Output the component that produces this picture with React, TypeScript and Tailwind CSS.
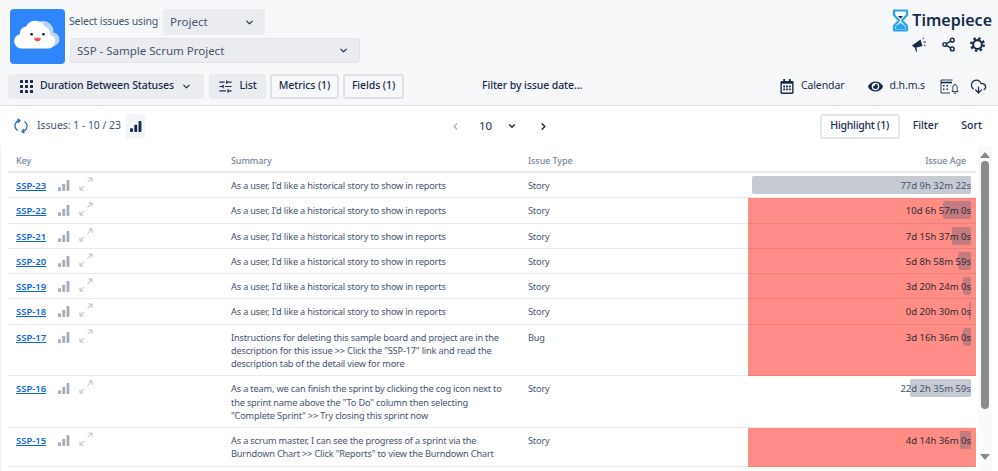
import React from "react";
import { ChevronDown, ChevronLeft, ChevronRight, SlidersHorizontal, Share2, CloudDownload } from "lucide-react";
import { FaRegCalendarAlt, FaEye } from "react-icons/fa";

const navy = "#172b4d";

const Bars = ({ className, color }: { className?: string; color: string }) => (
  <svg viewBox="0 0 14 13" className={className} fill={color}>
    <rect x="0" y="8.5" width="3.4" height="4.5" rx=".8" />
    <rect x="5" y="4.5" width="3.4" height="8.5" rx=".8" />
    <rect x="10" y="0" width="3.4" height="13" rx=".8" />
  </svg>
);

const Expand = () => (
  <svg viewBox="0 0 14 14" className="w-[14px] h-[14px]" fill="none" stroke="#b3b9c4" strokeWidth="1">
    <path d="M8.5 5.5 13 1M9.5 1H13V4.5" />
    <path d="M1 13 5 9M1 9.5V13H4.5" />
  </svg>
);

const GridDots = () => (
  <svg viewBox="0 0 13 13" className="w-[13px] h-[13px]" fill={navy}>
    {[0, 5, 10].flatMap((y) =>
      [0, 5, 10].map((x) => <rect key={`${x}-${y}`} x={x} y={y} width="3" height="3" rx=".5" />)
    )}
  </svg>
);

const Cloud = () => (
  <svg viewBox="0 0 37 37" className="w-[55px] h-[55px] rounded-[4px] shrink-0">
    <rect width="37" height="37" fill="#2f86fb" />
    <path d="M20 8.5a7 7 0 0 1 8.5 3.5c1 2 .6 3 .8 4a4.5 4.5 0 0 1 1.4 8.5L22 26z" fill="#b9d5fb" />
    <path
      d="M7.5 26.5a4.8 4.8 0 0 1-.9-9.500 4.600 4.600 0 0 1 4.200-5.200 7 7 0 0 1 12.700.2 5.600 5.600 0 0 1 3.500 5.300 4.700 4.700 0 0 1-.9 9.200z"
      fill="#fff"
    />
    <circle cx="14.500" cy="17" r=".9" fill="#222" />
    <circle cx="22.500" cy="17" r=".9" fill="#222" />
    <path d="M16.300 19.300h4.400a2.200 2.400 0 0 1-4.400 0z" fill="#f5544c" />
  </svg>
);

const Hourglass = () => (
  <svg viewBox="0 0 17 23" className="w-[17px] h-[23px] shrink-0">
    <path
      d="M2 1.500h13v4.500L10 11.500l5 5.500v4.500H2V17l5-5.500L2 6z"
      fill="none"
      stroke="#2aa3ee"
      strokeWidth="2.200"
      strokeLinejoin="round"
    />
    <path d="M6 7h5L8.500 9.800z" fill={navy} />
    <path d="M3.500 20.500V17.500L8.500 13.800l5 3.700v3z" fill="#2aa3ee" />
  </svg>
);

const Megaphone = () => (
  <svg viewBox="0 0 15 15" className="w-[16px] h-[15px]" fill={navy}>
    <path d="M0.500 8.500 9 2.500l2 6.500-7.500 2z" />
    <path d="M3.500 11 5 10.700 5.600 14.500 4.500 14.800z" />
    <path d="M11 2 12.500 0.700M12 5h2.500M12.500 8l1.500.7" stroke={navy} strokeWidth="1" fill="none" />
  </svg>
);

const Gear = () => (
  <svg viewBox="0 0 16 16" className="w-[15px] h-[15px]" fill="none" stroke={navy}>
    <circle cx="8" cy="8" r="4.700" strokeWidth="2.200" />
    <circle cx="8" cy="8" r="6.700" strokeWidth="2.400" strokeDasharray="2.600 2.660" />
  </svg>
);

const CalBell = () => (
  <svg viewBox="0 0 20 15" className="w-[20px] h-[15px]" fill="none" stroke={navy} strokeWidth=".9">
    <path d="M12.500 1H1v13h9" />
    <path d="M1 3.500h11" strokeWidth="1.600" />
    <g fill={navy} stroke="none">
      <rect x="3" y="6" width="1.500" height="1.500" />
      <rect x="6.500" y="6" width="1.500" height="1.500" />
      <rect x="3" y="9.500" width="1.500" height="1.500" />
      <rect x="6.500" y="9.500" width="1.500" height="1.500" />
    </g>
    <path d="M12 12.500c1-1 .8-2 .8-4.500a2.200 2.200 0 0 1 4.400 0c0 2.500-.2 3.500.8 4.500zM15 4.500v1M14 13.500a1 1 0 0 0 2 0" />
  </svg>
);

const Refresh = () => (
  <svg viewBox="0 0 14 16" className="w-[14px] h-[16px]" fill="none" stroke="#2f6aa8" strokeWidth="1.300">
    <path d="M3.500 12.500A5.500 5.500 0 0 1 5.500 2.500" />
    <path d="M3.500 0.800 6 2.500 4.300 5" />
    <path d="M10.500 3.500a5.500 5.500 0 0 1-2 10" />
    <path d="M10.500 15.200 8 13.500 9.700 11" />
  </svg>
);

type Row = { key: string; lines: string[]; type: string; age: string; w: number; red: boolean; h: string };
const story = ["As a user, I'd like a historical story to show in reports"];
const rows: Row[] = [
  { key: "SSP-23", lines: story, type: "Story", age: "77d 9h 32m 22s", w: 219, red: false, h: "h-[25.300px]" },
  { key: "SSP-22", lines: story, type: "Story", age: "10d 6h 57m 0s", w: 28, red: true, h: "h-[25.300px]" },
  { key: "SSP-21", lines: story, type: "Story", age: "7d 15h 37m 0s", w: 19, red: true, h: "h-[25.300px]" },
  { key: "SSP-20", lines: story, type: "Story", age: "5d 8h 58m 59s", w: 13, red: true, h: "h-[25.300px]" },
  { key: "SSP-19", lines: story, type: "Story", age: "3d 20h 24m 0s", w: 8, red: true, h: "h-[25.300px]" },
  { key: "SSP-18", lines: story, type: "Story", age: "0d 20h 30m 0s", w: 2, red: true, h: "h-[25.300px]" },
  {
    key: "SSP-17",
    lines: [
      "Instructions for deleting this sample board and project are in the",
      'description for this issue >> Click the "SSP-17" link and read the',
      "description tab of the detail view for more",
    ],
    type: "Bug",
    age: "3d 16h 36m 0s",
    w: 8,
    red: true,
    h: "h-[51.600px]",
  },
  {
    key: "SSP-16",
    lines: [
      "As a team, we can finish the sprint by clicking the cog icon next to",
      'the sprint name above the "To Do" column then selecting',
      '"Complete Sprint" >> Try closing this sprint now',
    ],
    type: "Story",
    age: "22d 2h 35m 59s",
    w: 61,
    red: false,
    h: "h-[51.800px]",
  },
  {
    key: "SSP-15",
    lines: [
      "As a scrum master, I can see the progress of a sprint via the",
      'Burndown Chart >> Click "Reports" to view the Burndown Chart',
    ],
    type: "Story",
    age: "4d 14h 36m 0s",
    w: 11,
    red: true,
    h: "h-[38.500px]",
  },
];

export default function App() {
  return (
    <div
      className="w-[998px] h-[471px] overflow-hidden bg-white text-[#44546f] flex flex-col"
      style={{ fontFamily: '"Noto Sans", sans-serif' }}
    >
      {/* Header */}
      <header className="h-[106px] shrink-0 bg-[#f7f8f9] border-b border-[#dfe1e6] flex flex-col">
        <div className="flex justify-between pl-[10px] pr-[6px] pt-[9px] h-[73px]">
          <div className="flex gap-[4px]">
            <Cloud />
            <div className="flex flex-col gap-[3px]">
              <div className="flex items-center gap-[5px]">
                <span className="w-[89px] whitespace-nowrap text-[10.500px] tracking-[-0.15px]">Select issues using</span>
                <div className="w-[102px] h-[26px] rounded-[3px] bg-[#ebecf0] flex items-center justify-between pl-[7px] pr-[10px] text-[11.500px]">
                  Project
                  <ChevronDown className="w-[11px] h-[11px] text-[#172b4d]" strokeWidth={2.500} />
                </div>
              </div>
              <div className="w-[290px] h-[25px] ml-[1px] rounded-[3px] bg-[#ebecf0] border border-[#e2e4e9] flex items-center justify-between pl-[6px] pr-[10px] text-[11.500px]">
                SSP - Sample Scrum Project
                <ChevronDown className="w-[11px] h-[11px] text-[#172b4d]" strokeWidth={2.500} />
              </div>
            </div>
          </div>
          <div className="flex flex-col items-end">
            <div className="flex items-center gap-[3px] text-[#172b4d] font-semibold text-[16px] leading-[23px]">
              <Hourglass />
              Timepiece
            </div>
            <div className="flex items-center gap-[14px] mt-[5px] pr-[7px]">
              <Megaphone />
              <Share2 className="w-[15px] h-[15px] text-[#172b4d]" strokeWidth={2.300} />
              <Gear />
            </div>
          </div>
        </div>
        <div className="flex items-center pl-[8px] pr-[11px] h-[26px] text-[#172b4d] text-[10.500px] tracking-[-0.1px]">
          <div className="w-[196px] h-[25px] rounded-[3px] bg-[#ebecf0] flex items-center pl-[12px] font-medium whitespace-nowrap">
            <GridDots />
            <span className="ml-[7px]">Duration Between Statuses</span>
            <ChevronDown className="w-[11px] h-[11px] ml-[7px]" strokeWidth={2.500} />
          </div>
          <div className="ml-[5px] w-[57px] h-[25px] rounded-[3px] bg-[#ebecf0] flex items-center justify-center gap-[6px] font-medium">
            <SlidersHorizontal className="w-[15px] h-[15px]" strokeWidth={1.800} />
            List
          </div>
          <div className="ml-[4px] w-[69px] h-[25px] rounded-[3px] border-2 border-[#dfe1e6] flex items-center justify-center font-medium">
            Metrics (1)
          </div>
          <div className="ml-[4px] w-[61px] h-[25px] rounded-[3px] border-2 border-[#dfe1e6] flex items-center justify-center font-medium">
            Fields (1)
          </div>
          <span className="ml-[78px] font-medium">Filter by issue date...</span>
          <FaRegCalendarAlt className="ml-auto w-[14px] h-[15px]" />
          <span className="ml-[7px]">Calendar</span>
          <FaEye className="ml-[24px] w-[15px] h-[15px]" />
          <span className="ml-[6px]">d.h.m.s</span>
          <span className="ml-[15px]">
            <CalBell />
          </span>
          <CloudDownload className="ml-[10px] w-[17px] h-[17px]" strokeWidth={1.800} />
        </div>
      </header>

      {/* Toolbar */}
      <div className="h-[40px] shrink-0 flex items-center pl-[14px] pr-[16px] text-[10.400px]">
        <Refresh />
        <span className="ml-[9px] w-[84px] whitespace-nowrap">Issues: 1 - 10 / 23</span>
        <div className="ml-[5px] w-[19px] h-[25px] rounded-[2px] bg-[#f4f5f7] flex items-center justify-center">
          <Bars className="w-[12px] h-[11px]" color={navy} />
        </div>
        <ChevronLeft className="ml-[305px] w-[11px] h-[11px] text-[#a5adba]" strokeWidth={2.500} />
        <span className="ml-[18px] w-[13px] text-[11.500px] text-[#172b4d]">10</span>
        <ChevronDown className="ml-[15px] w-[10px] h-[10px] text-[#172b4d]" strokeWidth={3} />
        <ChevronRight className="ml-[21px] w-[11px] h-[11px] text-[#172b4d]" strokeWidth={3} />
        <div className="ml-auto w-[80px] h-[25px] rounded-[3px] border-2 border-[#e4e6ea] flex items-center justify-center text-[#172b4d] font-medium text-[10.500px] tracking-[-0.25px]">
          Highlight (1)
        </div>
        <span className="ml-[13px] text-[#172b4d] font-medium text-[10.500px]">Filter</span>
        <span className="ml-[23px] text-[#172b4d] font-medium text-[10.500px]">Sort</span>
      </div>

      {/* Table */}
      <div className="flex flex-1 min-h-0 border-l border-[#f0f1f3]">
        <div className="w-[968px] ml-[7px] shrink-0">
          <div className="h-[27px] pt-[4px] flex items-center text-[9px] tracking-[-0.1px] font-medium text-[#7a869a] border-b-2 border-[#e4e6ea]">
            <span className="w-[223px] pl-[8px]">Key</span>
            <span className="w-[297px]">Summary</span>
            <span className="flex-1">Issue Type</span>
            <span className="pr-[10px]">Issue Age</span>
          </div>
          {rows.map((r) => (
            <div key={r.key} className={`${r.h} flex border-b border-[#e9ebee] text-[9.200px] tracking-[-0.17px] leading-[13.300px]`}>
              <div className="w-[223px] pl-[8px] pt-[6px] flex items-start">
                <a className="w-[31px] text-[9.500px] tracking-normal font-semibold underline text-[#0c66e4] whitespace-nowrap">{r.key}</a>
                <Bars className="ml-[11px] mt-[1px] w-[12px] h-[11px]" color="#a5adba" />
                <span className="ml-[9px] -mt-[2px]">
                  <Expand />
                </span>
              </div>
              <div className="w-[297px] pt-[6px] pr-[20px]">
                {r.lines.map((l) => (
                  <div key={l} className="whitespace-nowrap">
                    {l}
                  </div>
                ))}
              </div>
              <div className="w-[220px] pt-[6px]">{r.type}</div>
              <div
                className={`flex-1 relative pt-[6px] pr-[5px] text-right text-[9.500px] tracking-normal ${
                  r.red ? "bg-[#ff8d85] text-[#2c2a35] -mb-px border-b border-[#e8827c]" : ""
                }`}
              >
                <div
                  className={`absolute right-[5px] top-[3px] h-[18px] rounded-[2px] ${r.red ? "bg-[#c47b80]" : "bg-[#c5cad3]"}`}
                  style={{ width: r.w }}
                />
                <span className="relative whitespace-nowrap">{r.age}</span>
              </div>
            </div>
          ))}
        </div>

        {/* Scrollbar */}
        <div className="w-[14px] ml-[2px] shrink-0 bg-[#fafafa] flex flex-col items-center pt-[6px]">
          <div className="w-0 h-0 border-x-[5px] border-x-transparent border-b-[6px] border-b-[#8a8a8a]" />
          <div className="w-[8px] h-[248px] mt-[3px] rounded-[4px] bg-[#8c8c8c]" />
          <div className="mt-[45px] w-0 h-0 border-x-[5px] border-x-transparent border-t-[6px] border-t-[#8a8a8a]" />
        </div>
      </div>
    </div>
  );
}
